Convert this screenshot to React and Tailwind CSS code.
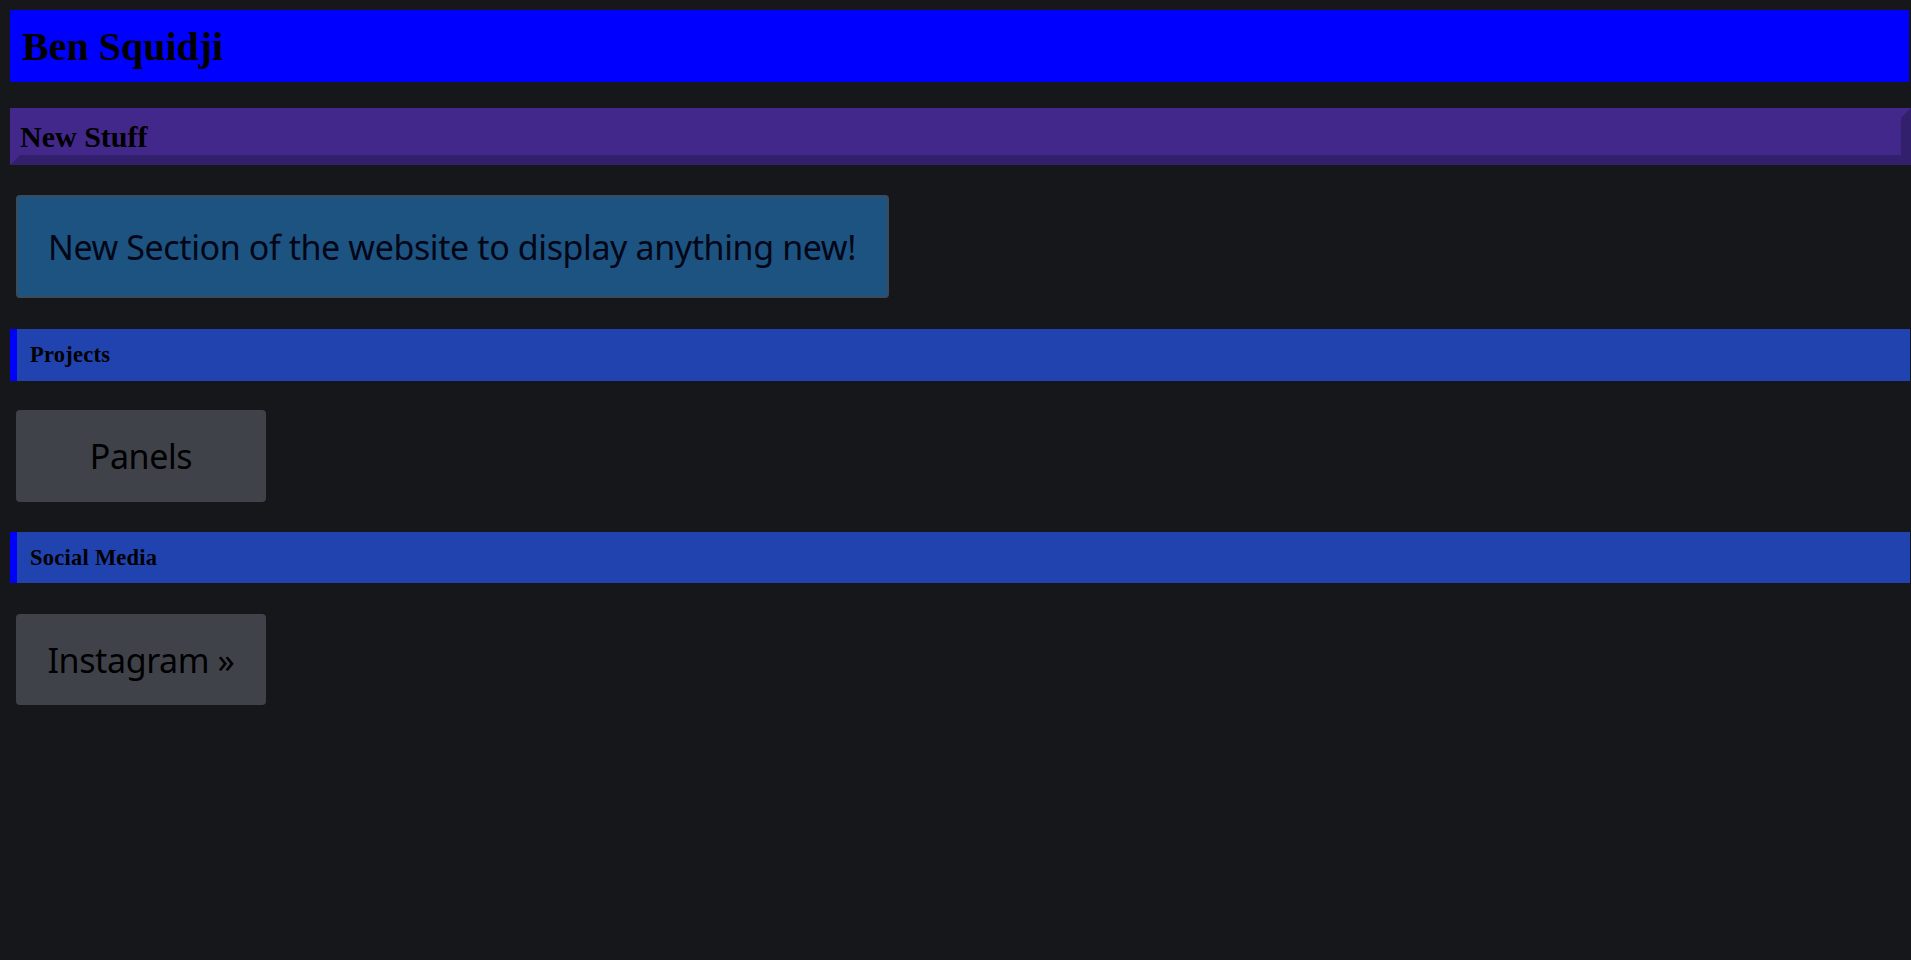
export default function App() {
  const serif = { fontFamily: '"Liberation Serif", "Times New Roman", serif' };
  const sans = { fontFamily: '"Noto Sans", "Open Sans", sans-serif' };
  return (
    <div className="min-h-screen w-full overflow-hidden bg-[#16171b] pl-[10px] pt-[10px]">
      <header className="flex h-[72px] w-[1899px] items-center bg-[#0000ff] pl-[12px] pt-[2px]">
        <h1 style={serif} className="text-[40px] font-bold leading-none text-black">Ben Squidji</h1>
      </header>

      <div className="mt-[26px] h-[57px] w-[1901px] border-[10px] border-t-[#42288a] border-l-[#42288a] border-r-[#33206c] border-b-[#33206c] bg-[#42288a]">
        <h2 style={serif} className="text-[30px] font-bold leading-[37px] text-black">New Stuff</h2>
      </div>

      <div className="ml-[6px] mt-[30px] flex h-[103px] w-[873px] items-center rounded-[4px] border-2 border-[#3b4b5e] bg-[#1d5380] pl-[30px]">
        <p style={sans} className="text-[34px] leading-none tracking-[-0.4px] text-[#020617]">New Section of the website to display anything new!</p>
      </div>

      <div className="mt-[31px] flex h-[52px] w-[1900px] items-center border-l-[7px] border-[#0000ff] bg-[#2143b0] pl-[13px]">
        <h3 style={serif} className="text-[22.5px] font-bold tracking-[0.25px] text-black">Projects</h3>
      </div>

      <div className="ml-[6px] mt-[29px] flex h-[92px] w-[250px] items-center justify-center rounded-[4px] bg-[#40424a]">
        <span style={sans} className="text-[34px] leading-none tracking-[-0.4px] text-black">Panels</span>
      </div>

      <div className="mt-[30px] flex h-[51px] w-[1900px] items-center border-l-[7px] border-[#0000ff] bg-[#2143b0] pl-[13px]">
        <h3 style={serif} className="text-[22.5px] font-bold tracking-[0.25px] text-black">Social Media</h3>
      </div>

      <div className="ml-[6px] mt-[31px] flex h-[91px] w-[250px] items-center justify-center rounded-[4px] bg-[#40424a]">
        <span style={sans} className="text-[34px] leading-none tracking-[-0.4px] text-black">Instagram »</span>
      </div>
    </div>
  );
}
